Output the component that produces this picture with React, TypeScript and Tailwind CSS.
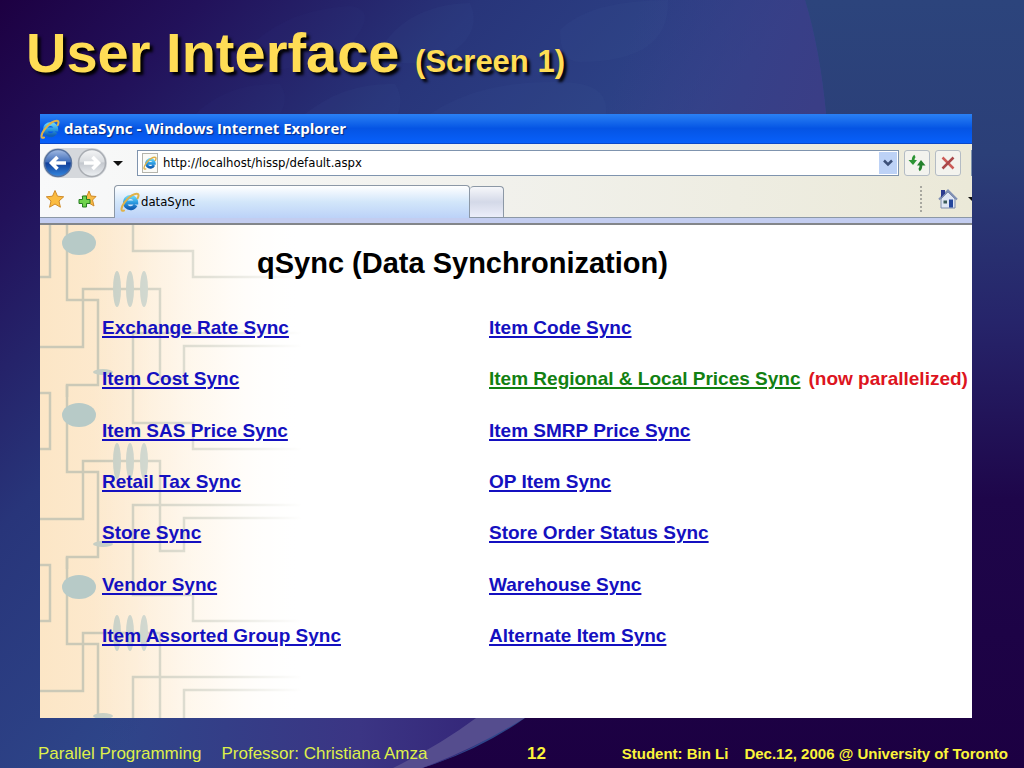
import { useId } from 'react';

const leftLinks = [
  'Exchange Rate Sync',
  'Item Cost Sync',
  'Item SAS Price Sync',
  'Retail Tax Sync',
  'Store Sync',
  'Vendor Sync',
  'Item Assorted Group Sync',
];

const rightLinks = [
  'Item Code Sync',
  'Item Regional & Local Prices Sync',
  'Item SMRP Price Sync',
  'OP Item Sync',
  'Store Order Status Sync',
  'Warehouse Sync',
  'Alternate Item Sync',
];

function SlideBackdrop() {
  return (
    <svg
      className="absolute inset-0 w-full h-full"
      viewBox="0 0 1024 768"
      preserveAspectRatio="none"
      aria-hidden="true"
    >
      <defs>
        <linearGradient id="disc" gradientUnits="userSpaceOnUse" x1="0" y1="0" x2="440" y2="400">
          <stop offset="0" stopColor="#1d0042" />
          <stop offset="0.25" stopColor="#22115a" />
          <stop offset="0.6" stopColor="#28357a" />
          <stop offset="1" stopColor="#2e468a" />
        </linearGradient>
        <linearGradient id="discEdge" gradientUnits="userSpaceOnUse" x1="640" y1="0" x2="830" y2="60">
          <stop offset="0" stopColor="#3c3a88" stopOpacity="0" />
          <stop offset="1" stopColor="#3a3e86" />
        </linearGradient>
        <linearGradient id="discFoot" gradientUnits="userSpaceOnUse" x1="100" y1="0" x2="470" y2="0">
          <stop offset="0" stopColor="#3a3684" stopOpacity="0" />
          <stop offset="0.7" stopColor="#3b3584" />
          <stop offset="1" stopColor="#35287a" />
        </linearGradient>
        <linearGradient id="outer" x1="0" y1="0" x2="0" y2="1">
          <stop offset="0" stopColor="#2c447c" />
          <stop offset="0.2" stopColor="#2b3f78" />
          <stop offset="0.42" stopColor="#26246a" />
          <stop offset="0.65" stopColor="#1e064a" />
          <stop offset="1" stopColor="#1c0042" />
        </linearGradient>
      </defs>
      <rect width="1024" height="768" fill="url(#outer)" />
      <path d="M0 0H805Q820 50 826 114Q850 440 525 718Q480 750 422 768H0Z" fill="url(#disc)" />
      <path d="M600 0H805Q820 50 826 114H600Z" fill="url(#discEdge)" />
      <path d="M60 700H545Q480 750 422 768H60Z" fill="url(#discFoot)" />
      <path d="M490 705H545Q485 745 422 768H393Q440 745 476 718Z" fill="#554d8e" />
      <g fill="#4a6aa8" fillOpacity="0.08">
        <path d="M230 70Q270 10 350 6Q380 10 350 45Q310 75 230 70Z" fillOpacity="0.04" />
        <path d="M375 60Q400 5 470 3Q482 30 455 50Q430 70 375 60Z" />
        <path d="M560 30Q590 0 668 0Q670 62 580 62Q560 62 560 30Z" />
        <path d="M195 114Q230 82 280 84Q290 98 280 114Z" fillOpacity="0.04" />
        <path d="M305 114Q345 82 395 84Q404 98 398 114Z" />
        <path d="M430 114Q480 80 560 82Q610 82 606 114Z" />
      </g>
    </svg>
  );
}

function ExplorerLogo({ className }: { className: string }) {
  const id = useId();
  return (
    <svg className={className} viewBox="0 0 20 20" fill="none" aria-hidden="true">
      <linearGradient id={id} x1="0" y1="0" x2="0" y2="1">
        <stop offset="0" stopColor="#62d0f6" />
        <stop offset="0.5" stopColor="#2b9ae0" />
        <stop offset="1" stopColor="#1260b4" />
      </linearGradient>
      <path
        d="M15.6 13.2A5.6 5.6 0 1 1 16.200 10.6H6"
        stroke={`url(#${id})`}
        strokeWidth="4"
      />
      <path
        d="M4 18.5C.5 20 .5 15.500 5 9.800C9 4.500 15 .8 17.800 2C19 2.600 18.600 4.500 17.600 6.200"
        stroke="#dfb24a"
        strokeWidth="2"
        strokeLinecap="round"
      />
    </svg>
  );
}

function NavArrow({ forward = false }: { forward?: boolean }) {
  const id = useId();
  return (
    <svg className="w-[30px] h-[30px]" viewBox="0 0 30 30" aria-hidden="true">
      <linearGradient id={id} x1="0" y1="0" x2="0" y2="1">
        <stop offset="0" stopColor={forward ? '#f4f5f6' : '#a3bbe3'} />
        <stop offset="0.45" stopColor={forward ? '#d9dce0' : '#426fbb'} />
        <stop offset="0.5" stopColor={forward ? '#c4c8ce' : '#123f99'} />
        <stop offset="1" stopColor={forward ? '#eef1f4' : '#3487df'} />
      </linearGradient>
      <circle cx="15" cy="15" r="13.500" fill={`url(#${id})`} stroke={forward ? '#a9adb3' : '#58739f'} strokeWidth="1.500" />
      <path
        d={forward ? 'M7 15H21M15.500 9L21.500 15L15.500 21' : 'M23 15H9M14.500 9L8.500 15L14.500 21'}
        fill="none"
        stroke="#fff"
        strokeWidth="3.600"
      />
    </svg>
  );
}

function Star({ withPlus = false }: { withPlus?: boolean }) {
  return (
    <svg className="w-5 h-5" viewBox="0 0 20 20" aria-hidden="true">
      {withPlus ? (
        <>
          <path d="M12 2L14 7L19 7.500L15.500 11L17 17L12 14L7 16L8 11L5 7.500L10 7Z" fill="#f9bb45" stroke="#cf8a28" />
          <path d="M5.500 7H9.500V10.500H13V14.500H9.500V18H5.500V14.500H2V10.500H5.500Z" fill="#6fd34c" stroke="#267c22" />
        </>
      ) : (
        <path
          d="M10 1.500L12.500 7.200L18.700 7.800L14 12L15.400 18.200L10 15L4.600 18.200L6 12L1.300 7.800L7.500 7.200Z"
          fill="#fbbc40"
          stroke="#cf8a28"
        />
      )}
    </svg>
  );
}

function HomeIcon() {
  return (
    <svg className="w-5 h-5" viewBox="0 0 20 20" aria-hidden="true">
      <path d="M3 10L10 3L17 10V19H3Z" fill="#dfe6f3" stroke="#7d8cac" />
      <path d="M1 10.500L10 1.500L19 10.500" fill="none" stroke="#8090b4" strokeWidth="2" />
      <path d="M3 1H7V4.500L3 8.500Z" fill="#2b3a90" />
      <rect x="11" y="10.500" width="4" height="8" fill="#25479c" />
      <rect x="5.500" y="11.500" width="3.500" height="3" fill="#3b5a58" />
    </svg>
  );
}

// Tan circuit pattern that runs down the left side of the page, one tile per 172px
function CircuitBackground() {
  return (
    <svg className="absolute left-0 top-0 w-[262px] h-full" aria-hidden="true">
      <defs>
        <linearGradient id="tan" x1="0" y1="0" x2="1" y2="0">
          <stop offset="0" stopColor="#fce6c6" />
          <stop offset="0.35" stopColor="#fdebd2" />
          <stop offset="0.7" stopColor="#fff7ea" />
          <stop offset="1" stopColor="#ffffff" />
        </linearGradient>
        <linearGradient id="fade" x1="0" y1="0" x2="1" y2="0">
          <stop offset="0.2" stopColor="#fff" stopOpacity="0" />
          <stop offset="0.65" stopColor="#fff" stopOpacity="0.45" />
          <stop offset="1" stopColor="#fff" />
        </linearGradient>
      </defs>
      <rect width="262" height="100%" fill="url(#tan)" />
      {[-172, 0, 172, 344].map((y) => (
        <g key={y} transform={`translate(0 ${y})`}>
          <g fill="none" stroke="#cbc9b7" strokeWidth="2.500">
            <path d="M0 -4H10V52H0" />
            <path d="M27 -12V75H58V160H27V172" />
            <path d="M0 122H43V64H120V154H144V121H262" />
            <path d="M262 108H93V198H153V224H262" />
          </g>
          <g fill="#c6cec3">
            <ellipse cx="77" cy="64" rx="4" ry="18" />
            <ellipse cx="90" cy="64" rx="4" ry="18" />
            <ellipse cx="104" cy="64" rx="4" ry="18" />
            <ellipse cx="63" cy="147" rx="10" ry="3" />
          </g>
          <ellipse cx="39" cy="18" rx="17" ry="12" fill="#b7cac7" />
        </g>
      ))}
      <rect width="262" height="100%" fill="url(#fade)" />
    </svg>
  );
}

function SyncLink({ label }: { label: string }) {
  const parallel = label.startsWith('Item Regional');
  return (
    <li className="flex items-center whitespace-nowrap">
      <a
        href="#"
        className={
          parallel
            ? 'text-[#128012] underline decoration-2 underline-offset-2'
            : 'text-[#1410c0] underline decoration-2 underline-offset-2'
        }
      >
        {label}
      </a>
      {parallel && <span className="ml-2 text-[#dd1420]">(now parallelized)</span>}
    </li>
  );
}

export default function App() {
  return (
    <div className="relative min-h-screen flex flex-col overflow-hidden bg-[#1d0044] font-['Liberation_Sans',Arial,sans-serif]">
      <SlideBackdrop />

      <h1 className="relative h-[114px] pl-[26px] pt-[21px] text-[56px] leading-[64px] font-bold text-[#ffdd55] whitespace-nowrap [text-shadow:3px_3px_3px_#000]">
        User Interface <span className="text-[31px]">(Screen 1)</span>
      </h1>

      {/* Browser window */}
      <main className="relative ml-10 mr-[52px] bg-white overflow-hidden">
        <div className="h-[30px] flex items-center gap-1 bg-gradient-to-b from-[#2a80f4] via-[#0554e4] to-[#0860fa] border-b border-[#0a48c8]">
          <ExplorerLogo className="w-5 h-5" />
          <span className="font-['Open_Sans',sans-serif] text-[15px] font-bold text-white whitespace-nowrap [text-shadow:1px_1px_1px_#0a2a80]">
            dataSync - Windows Internet Explorer
          </span>
        </div>

        <div className="bg-gradient-to-r from-[#f8f9fa] via-[#f1f1ec] to-[#ebe9d8]">
          <div className="h-[38px] flex items-center pl-[3px]">
            <div className="flex gap-1 rounded-full bg-[#d5d8dc]">
              <button type="button" aria-label="Back">
                <NavArrow />
              </button>
              <button type="button" aria-label="Forward">
                <NavArrow forward />
              </button>
            </div>
            <button type="button" aria-label="Recent pages" className="w-[22px] mr-2 flex justify-center">
              <svg className="w-[10px] h-[5px]" viewBox="0 0 10 5" aria-hidden="true">
                <path d="M0 0H10L5 5Z" fill="#111" />
              </svg>
            </button>
            <div className="flex-1 h-[26px] flex items-center border border-[#7f94ae] bg-white">
              <span className="ml-1 w-4 h-5 flex items-center border border-[#b4b4ac] bg-[#fafaf6]">
                <ExplorerLogo className="w-[14px] h-[14px]" />
              </span>
              <input
                type="text"
                aria-label="Address"
                defaultValue="http://localhost/hissp/default.aspx"
                className="flex-1 min-w-0 ml-[5px] bg-transparent font-['DejaVu_Sans_Condensed','DejaVu_Sans',sans-serif] text-[13px] text-black outline-none"
              />
              <button
                type="button"
                aria-label="Show addresses"
                className="w-[18px] h-[22px] mr-px flex items-center justify-center bg-[#bdd2f6]"
              >
                <svg className="w-[10px] h-[8px]" viewBox="0 0 10 8" fill="none" aria-hidden="true">
                  <path d="M1 1.500L5 5.500L9 1.500" stroke="#3c5078" strokeWidth="2.500" />
                </svg>
              </button>
            </div>
            <button
              type="button"
              aria-label="Refresh"
              className="ml-[5px] w-[26px] h-[26px] flex items-center justify-center rounded-[3px] border border-[#b4bcc4] bg-[#f3f3ee]"
            >
              <svg className="w-[18px] h-[18px]" viewBox="0 0 18 18" fill="none" aria-hidden="true">
                <path d="M7 2Q5 3 5 8" stroke="#2c9434" strokeWidth="2.800" />
                <path d="M.5 6H9L5 11Z" fill="#2c9434" />
                <path d="M11 16Q13 15 13 10" stroke="#23802c" strokeWidth="2.800" />
                <path d="M9 11.500H17.500L13 6Z" fill="#23802c" />
              </svg>
            </button>
            <button
              type="button"
              aria-label="Stop"
              className="ml-[5px] w-[26px] h-[26px] flex items-center justify-center rounded-[3px] border border-[#b4bcc4] bg-[#f3f3ee]"
            >
              <svg className="w-[14px] h-[14px]" viewBox="0 0 14 14" fill="none" aria-hidden="true">
                <path d="M1.500 1.500L12.500 12.500" stroke="#cc5c58" strokeWidth="2.500" />
                <path d="M12.500 1.500L1.500 12.500" stroke="#a8484a" strokeWidth="2.500" />
              </svg>
            </button>
            <span className="ml-[10px] w-px h-[26px] bg-[#7f94ae]" />
          </div>

          <div className="h-9 flex items-end border-b border-[#8c98a6]">
            <div className="w-[74px] h-9 flex items-center gap-3 pl-[5px]">
              <button type="button" aria-label="Favorites">
                <Star />
              </button>
              <button type="button" aria-label="Add to favorites">
                <Star withPlus />
              </button>
            </div>
            <button
              type="button"
              className="w-[356px] h-[33px] -mb-px pl-[5px] flex items-center gap-px rounded-t border border-b-0 border-[#8c98a6] bg-gradient-to-b from-white via-[#d2e6fa] to-[#bcd2f8] font-['DejaVu_Sans_Condensed','DejaVu_Sans',sans-serif] text-[13px] text-black"
            >
              <ExplorerLogo className="w-5 h-5" />
              dataSync
            </button>
            <button
              type="button"
              aria-label="New tab"
              className="w-[34px] h-[31px] rounded-t border border-l-0 border-b-0 border-[#8c98a6] bg-gradient-to-b from-[#f6f7fa] via-[#d4d9e8] to-[#eceefa]"
            />
            <div className="flex-1 h-9 flex items-center justify-end">
              <span className="h-[26px] mr-[16px] border-l-2 border-dotted border-[#a8a8a0]" />
              <button type="button" aria-label="Home">
                <HomeIcon />
              </button>
              <svg className="ml-[10px] w-1 h-[5px]" viewBox="0 0 4 5" aria-hidden="true">
                <path d="M0 0H4V4Z" fill="#111" />
              </svg>
            </div>
          </div>
          <div className="h-[7px] bg-[#c3cdf0] border-b-2 border-[#83868a]" />
        </div>

        {/* Page content */}
        <div className="relative h-[493px]">
          <CircuitBackground />
          <div className="relative pt-[22px] font-bold">
            <h2 className="pl-[217px] text-[29px] leading-8 text-black whitespace-nowrap">
              qSync (Data Synchronization)
            </h2>
            <div className="mt-[23px] h-[360px] pl-[62px] grid grid-cols-[387px_1fr] text-[19px] leading-6">
              <ul className="grid grid-rows-7">
                {leftLinks.map((label) => (
                  <SyncLink key={label} label={label} />
                ))}
              </ul>
              <ul className="grid grid-rows-7">
                {rightLinks.map((label) => (
                  <SyncLink key={label} label={label} />
                ))}
              </ul>
            </div>
          </div>
        </div>
      </main>

      <footer className="relative flex-1 grid grid-cols-[489px_1fr_auto] items-center pl-[38px] pr-4 pt-[21px] text-[#fbf43a] whitespace-nowrap">
        <div className="flex gap-5 text-[17px] leading-5 text-[#dff04a]">
          <span>Parallel Programming</span>
          <span>Professor: Christiana Amza</span>
        </div>
        <span className="text-[17px] leading-5 font-bold">12</span>
        <div className="flex gap-4 text-[15px] leading-5 font-bold">
          <span>Student: Bin Li</span>
          <span>Dec.12, 2006 @ University of Toronto</span>
        </div>
      </footer>
    </div>
  );
}
